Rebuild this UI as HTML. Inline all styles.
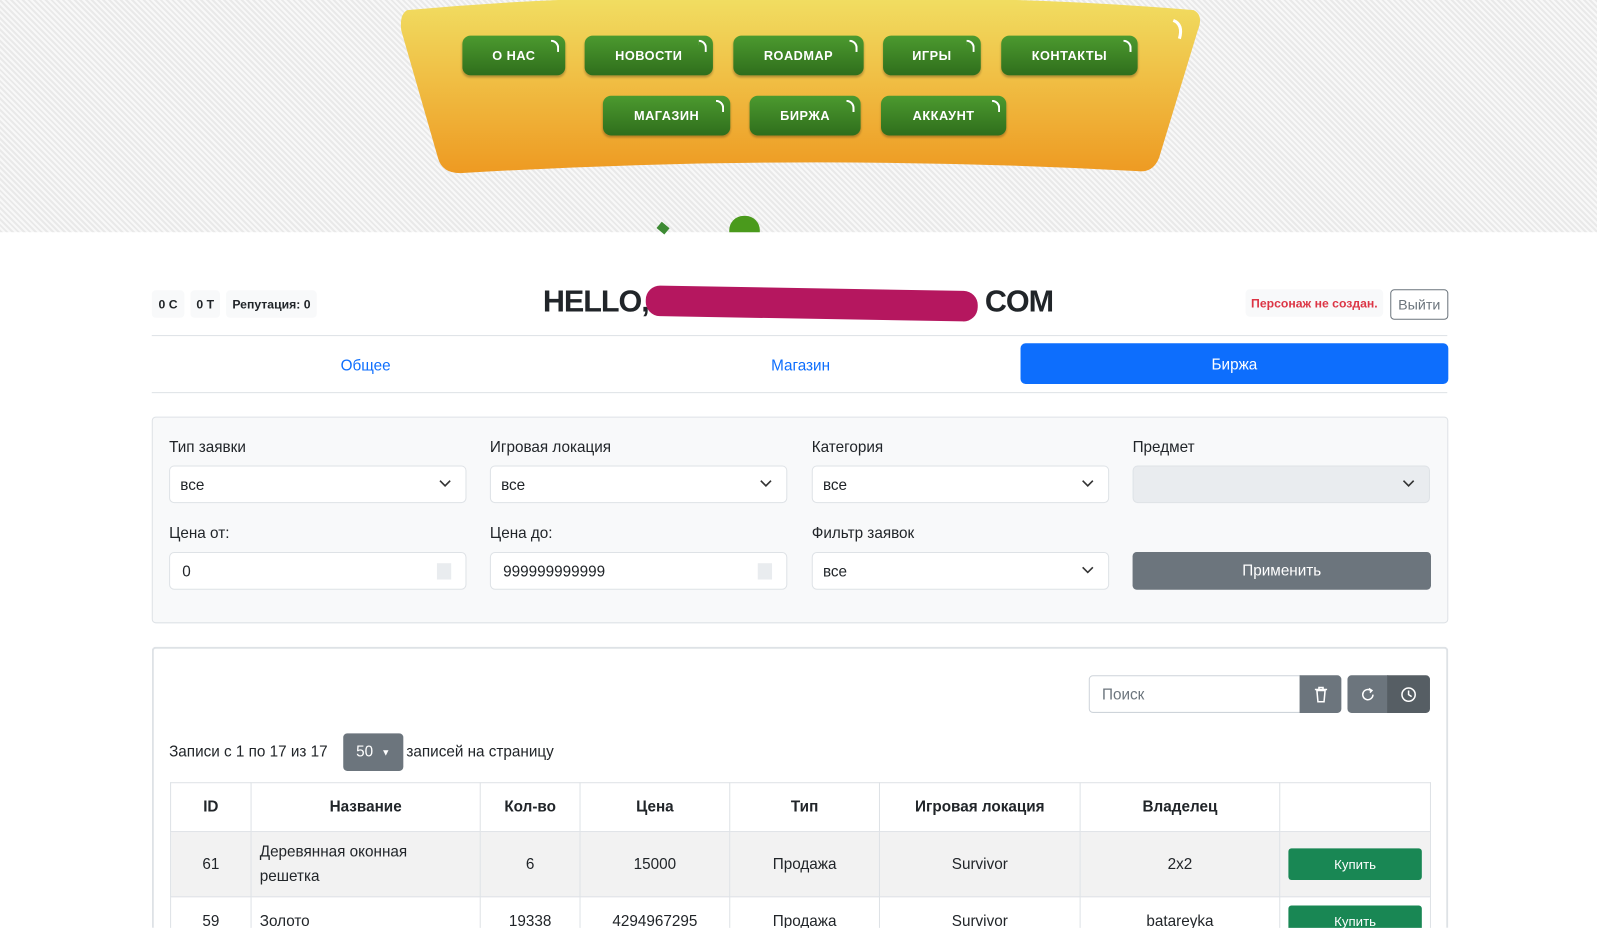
<!DOCTYPE html>
<html style="width:1597px;height:928px;overflow:hidden"><head><meta charset="utf-8"><style>
*{box-sizing:border-box;margin:0;padding:0}
body{width:1597px;height:928px;overflow:hidden;background:#fff;font-family:"Liberation Sans","DejaVu Sans",sans-serif;color:#212529;font-size:15px;position:relative}
#w{position:absolute;left:0;top:0;width:1568px;height:911px;overflow:hidden;transform:scale(1.0185);transform-origin:0 0}
.top{position:absolute;left:0;top:0;width:1597px;height:228px;background:repeating-linear-gradient(45deg,#e9e9e9 0 2px,#f8f8f8 2px 4px)}
.ab{position:absolute}
.nb{position:absolute;height:39px;border-radius:8px;background:linear-gradient(#4c9a2f,#2f6e1c);color:#fff;font-weight:bold;font-size:12.5px;letter-spacing:.5px;display:flex;align-items:center;justify-content:center;box-shadow:0 2px 2px rgba(0,0,0,.25)}
.nb:after{content:"";position:absolute;right:6px;top:4px;width:6px;height:10px;border-top:2px solid #fff;border-right:2px solid #fff;border-radius:0 8px 0 0}
.badge{position:absolute;top:285px;height:27px;background:#f8f9fa;border-radius:4px;font-size:12px;font-weight:bold;display:flex;align-items:center;justify-content:center}
.hr{position:absolute;left:149px;width:1272px;height:1px;background:#dee2e6}
.tab{position:absolute;top:337px;height:40px;display:flex;align-items:center;justify-content:center;color:#0d6efd;font-size:15px}
.lbl{position:absolute;font-size:15px}
.sel{position:absolute;height:37px;width:292px;background:#fff;border:1px solid #dee2e6;border-radius:5px;font-size:15px;padding:10px 0 0 10px}
.sel svg{position:absolute;right:14px;top:13px}
.btn{position:absolute;display:flex;align-items:center;justify-content:center;color:#fff}
table{position:absolute;left:167px;top:768px;border-collapse:collapse;font-size:15px}
td,th{border:1px solid #dee2e6;text-align:center;vertical-align:middle}
th{height:48px;font-weight:bold}
.r td{vertical-align:top;padding-top:15px}
</style></head><body><div id="w">
<div class="top"></div>
<svg class="ab" style="left:392px;top:0" width="788" height="172"><defs><linearGradient id="g" x1="0" y1="0" x2="0" y2="1"><stop offset="0" stop-color="#f1de62"/><stop offset="1" stop-color="#ee9a22"/></linearGradient></defs><path d="M8 10 Q200 -8 394 0 Q590 -6 780 10 Q790 15 784 30 L746 155 Q740 170 725 168 Q394 150 60 170 Q42 170 38 155 L2 30 Q0 14 8 10Z" fill="url(#g)"/><path d="M760 20 q10 4 6 18" stroke="#fff" stroke-width="3" fill="none"/></svg>
<div class="nb" style="left:454px;top:35px;width:101px">О НАС</div>
<div class="nb" style="left:574px;top:35px;width:126px">НОВОСТИ</div>
<div class="nb" style="left:720px;top:35px;width:128px">ROADMAP</div>
<div class="nb" style="left:867px;top:35px;width:96px">ИГРЫ</div>
<div class="nb" style="left:983px;top:35px;width:134px">КОНТАКТЫ</div>
<div class="nb" style="left:592px;top:94px;width:125px">МАГАЗИН</div>
<div class="nb" style="left:736px;top:94px;width:109px">БИРЖА</div>
<div class="nb" style="left:865px;top:94px;width:123px">АККАУНТ</div>
<div class="ab" style="left:716px;top:212px;width:30px;height:16px;background:#4a9a1c;border-radius:14px 14px 0 0"></div>
<div class="ab" style="left:646px;top:220px;width:10px;height:8px;background:#3d8a33;transform:rotate(40deg)"></div>

<div class="badge" style="left:149px;width:32px">0 C</div>
<div class="badge" style="left:187px;width:29px">0 T</div>
<div class="badge" style="left:222px;width:89px">Репутация: 0</div>
<div class="ab" style="left:533px;top:280px;font-size:30px;font-weight:bold;letter-spacing:-1px">HELLO,<span style="display:inline-block;width:330px"></span>COM</div>
<div class="ab" style="left:634px;top:283px;width:326px;height:30px;background:#b5175f;border-radius:14px;transform:rotate(1deg)"></div>
<div class="badge" style="left:1223px;width:135px;color:#dc3545;font-size:12px;top:284px">Персонаж не создан.</div>
<div class="ab" style="left:1365px;top:284px;width:57px;height:30px;border:1px solid #6c757d;border-radius:4px;color:#6c757d;font-size:14px;display:flex;align-items:center;justify-content:center">Выйти</div>

<div class="hr" style="top:329px"></div>
<div class="hr" style="top:385px"></div>
<div class="tab" style="left:149px;width:420px;top:339px">Общее</div>
<div class="tab" style="left:576px;width:420px;top:339px">Магазин</div>
<div class="tab" style="left:1002px;width:420px;background:#0d6efd;color:#fff;border-radius:5px;padding-top:3px">Биржа</div>

<div class="ab" style="left:149px;top:409px;width:1273px;height:203px;background:#f8f9fa;border:1px solid #dee2e6;border-radius:4px"></div>
<div class="lbl" style="left:166px;top:431px">Тип заявки</div>
<div class="lbl" style="left:481px;top:431px">Игровая локация</div>
<div class="lbl" style="left:797px;top:431px">Категория</div>
<div class="lbl" style="left:1112px;top:431px">Предмет</div>
<div class="sel" style="left:166px;top:457px">все<svg width="12" height="8"><path d="M1 1l5 5 5-5" stroke="#333" stroke-width="1.6" fill="none"/></svg></div>
<div class="sel" style="left:481px;top:457px">все<svg width="12" height="8"><path d="M1 1l5 5 5-5" stroke="#333" stroke-width="1.6" fill="none"/></svg></div>
<div class="sel" style="left:797px;top:457px">все<svg width="12" height="8"><path d="M1 1l5 5 5-5" stroke="#333" stroke-width="1.6" fill="none"/></svg></div>
<div class="sel" style="left:1112px;top:457px;background:#e9ecef"><svg width="12" height="8"><path d="M1 1l5 5 5-5" stroke="#333" stroke-width="1.6" fill="none"/></svg></div>
<div class="lbl" style="left:166px;top:515px">Цена от:</div>
<div class="lbl" style="left:481px;top:515px">Цена до:</div>
<div class="lbl" style="left:797px;top:515px">Фильтр заявок</div>
<div class="sel" style="left:166px;top:542px;padding-left:12px">0<div class="ab" style="right:14px;top:10px;width:14px;height:16px;background:#e9ecef"></div></div>
<div class="sel" style="left:481px;top:542px;padding-left:12px">999999999999<div class="ab" style="right:14px;top:10px;width:14px;height:16px;background:#e9ecef"></div></div>
<div class="sel" style="left:797px;top:542px">все<svg width="12" height="8"><path d="M1 1l5 5 5-5" stroke="#333" stroke-width="1.6" fill="none"/></svg></div>
<div class="btn" style="left:1112px;top:542px;width:293px;height:37px;background:#6c757d;border-radius:4px">Применить</div>

<div class="ab" style="left:149px;top:635px;width:1273px;height:276px;border:2px solid #dee2e6;border-bottom:0;border-radius:4px 4px 0 0"></div>
<div class="ab" style="left:1069px;top:663px;width:208px;height:37px;border:1px solid #ced4da;border-radius:4px 0 0 4px;color:#6c757d;padding:10px 12px">Поиск</div>
<div class="btn" style="left:1276px;top:663px;width:41px;height:37px;background:#6c757d;border-radius:0 4px 4px 0"><svg width="14" height="16"><path d="M1 3h12M5 3V1h4v2M3 4h8l-1 11H4z" stroke="#fff" stroke-width="1.5" fill="none"/></svg></div>
<div class="btn" style="left:1323px;top:663px;width:40px;height:37px;background:#6c757d;border-radius:4px 0 0 4px"><svg width="14" height="14"><path d="M10 3A5 5 0 1 0 12 7" stroke="#fff" stroke-width="1.5" fill="none"/><path d="M8 1l3 2-2 2" stroke="#fff" stroke-width="1.5" fill="none"/></svg></div>
<div class="btn" style="left:1362px;top:663px;width:42px;height:37px;background:#565e64;border-radius:0 4px 4px 0"><svg width="16" height="16"><circle cx="8" cy="8" r="6.5" stroke="#fff" stroke-width="1.5" fill="none"/><path d="M8 4v4l3 2" stroke="#fff" stroke-width="1.5" fill="none"/></svg></div>
<div class="ab" style="left:166px;top:730px">Записи с 1 по 17 из 17</div>
<div class="btn" style="left:337px;top:720px;width:59px;height:37px;background:#6c757d;border-radius:4px">50 <span style="font-size:9px;margin-left:8px">▼</span></div>
<div class="ab" style="left:399px;top:730px">записей на страницу</div>
<table>
<tr><th style="width:79px">ID</th><th style="width:225px">Название</th><th style="width:98px">Кол-во</th><th style="width:147px">Цена</th><th style="width:147px">Тип</th><th style="width:197px">Игровая локация</th><th style="width:196px">Владелец</th><th style="width:148px"></th></tr>
<tr style="background:#f2f2f2;height:64px"><td>61</td><td style="text-align:left;padding:0 8px;line-height:24px">Деревянная оконная<br>решетка</td><td>6</td><td>15000</td><td>Продажа</td><td>Survivor</td><td>2x2</td><td><div style="margin:0 8px;height:31px;background:#198754;color:#fff;border-radius:3px;font-size:13px;display:flex;align-items:center;justify-content:center">Купить</div></td></tr>
<tr class="r" style="height:60px"><td>59</td><td style="text-align:left;padding-left:8px">Золото</td><td>19338</td><td>4294967295</td><td>Продажа</td><td>Survivor</td><td>batareyka</td><td style="padding-top:8px"><div style="margin:0 8px;height:31px;background:#198754;color:#fff;border-radius:3px;font-size:13px;display:flex;align-items:center;justify-content:center">Купить</div></td></tr>
</table>
</div></body></html>
